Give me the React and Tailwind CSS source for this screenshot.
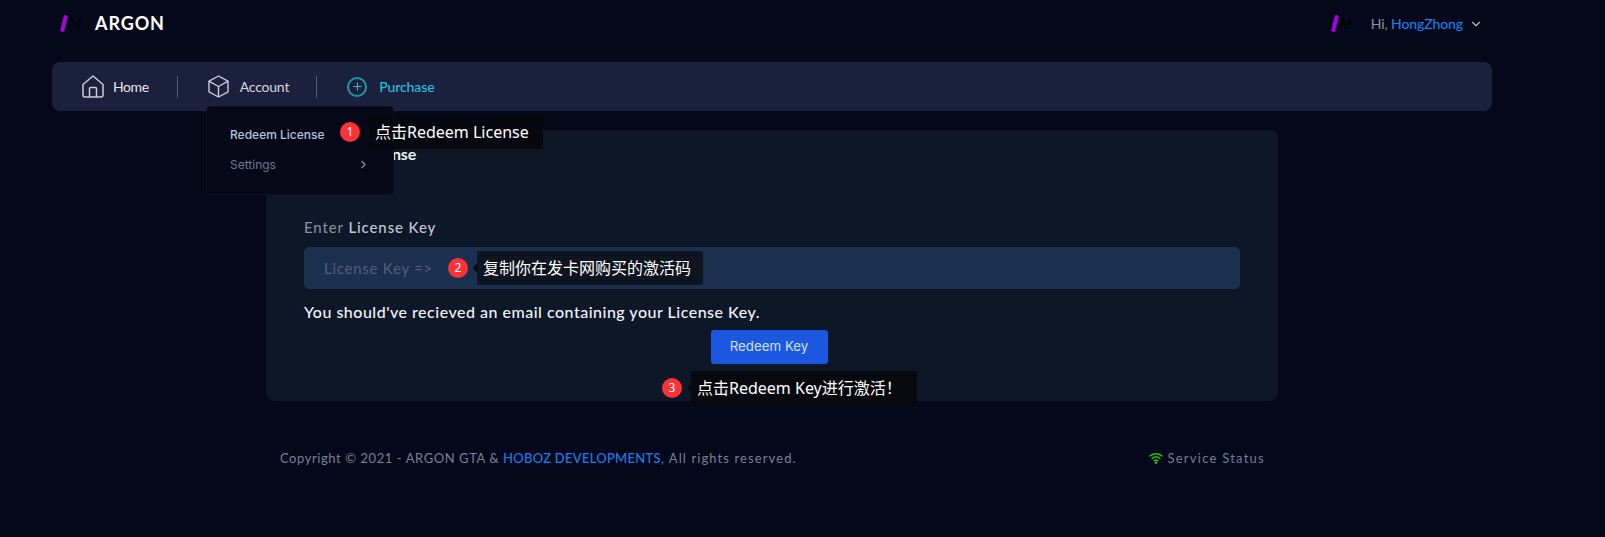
import React from 'react';
import { ChevronDown, ChevronRight, Plus } from 'lucide-react';

const QS = 'font-["Lato","Noto_Sans_CJK_SC",sans-serif]';

function Logo({ small }) {
  return (
    <div className={`relative flex items-center ${small ? 'w-[39px]' : 'w-[33px]'} h-[20px]`}>
      <span className="absolute left-[1px] top-[2px] w-[4px] h-[17px] bg-[#a800e0] rotate-[14deg] rounded-[1px]" />
      <span className="absolute left-[5px] top-[1px] text-[16px] leading-[20px] text-black font-['Liberation_Sans',sans-serif]">Ar</span>
    </div>
  );
}

function HomeIcon() {
  return (
    <svg width="22" height="23" viewBox="0 0 22 23" fill="none" stroke="#c9ccd8" strokeWidth="1.5" strokeLinejoin="round">
      <path d="M1 9.5 11 1l10 8.5V20a2 2 0 0 1-2 2H3a2 2 0 0 1-2-2z" />
      <path d="M7.5 22v-8.5a1 1 0 0 1 1-1h5a1 1 0 0 1 1 1V22" />
    </svg>
  );
}

function BoxIcon() {
  return (
    <svg width="21" height="23" viewBox="0 0 21 23" fill="none" stroke="#c9ccd8" strokeWidth="1.4" strokeLinejoin="round">
      <path d="M10.5 1 20 6.2v10.6L10.5 22 1 16.8V6.2z" />
      <path d="M1 6.2l9.5 5.3L20 6.2M10.5 11.5V22" />
    </svg>
  );
}

function Wifi() {
  return (
    <svg width="14" height="12" viewBox="0 0 14 12" fill="none" stroke="#22c411" strokeWidth="1.5" strokeLinecap="round">
      <path d="M1 4c3.4-3 8.6-3 12 0" />
      <path d="M3.2 6.4c2.2-1.9 5.4-1.9 7.6 0" />
      <path d="M5.3 8.6c1-.8 2.4-.8 3.4 0" />
      <circle cx="7" cy="10.6" r=".6" fill="#22c411" />
    </svg>
  );
}

function Tip({ num, className, children, boxClass }) {
  return (
    <div className={`absolute flex items-center ${className}`}>
      <span className="w-[20px] h-[20px] rounded-full bg-[#fb3236] text-white text-[12px] flex items-center justify-center font-['Noto_Sans',sans-serif]">
        {num}
      </span>
      <span className="ml-[5px] w-0 h-0 border-y-[5px] border-y-transparent border-r-[4px] border-r-[#0a0c14]" />
      <span className={`h-[34px] flex items-center rounded-[2px] text-white text-[16px] whitespace-nowrap font-['Noto_Sans','Noto_Sans_CJK_SC',sans-serif] ${boxClass}`}>
        {children}
      </span>
    </div>
  );
}

export default function App() {
  return (
    <div className={`relative w-[1605px] h-[537px] overflow-hidden bg-[#05081a] text-white ${QS}`}>
      {/* Top bar */}
      <header className="h-[46px] flex items-center pl-[61px] pr-[122px] justify-between">
        <div className="flex items-center">
          <Logo />
          <span className="ml-[1px] text-[18px] font-bold tracking-[0.9px]">ARGON</span>
        </div>
        <div className="flex items-center">
          <Logo small />
          <span className="text-[14px] text-[#8d93a8] tracking-[-0.1px]">Hi, <span className="text-[#1a7fec] font-medium">HongZhong</span></span>
          <ChevronDown size={14} className="ml-[6px] mt-[2px] text-[#b5b8c4]" />
        </div>
      </header>

      {/* Nav */}
      <nav className="ml-[52px] mt-[16px] w-[1440px] h-[49px] rounded-[8px] bg-[#1b203c] flex items-center pl-[30px]">
        <HomeIcon />
        <span className="ml-[9px] text-[14px] text-[#e4e6ee] tracking-[-0.4px]">Home</span>
        <span className="ml-[28px] w-px h-[22px] bg-[#565a72]" />
        <span className="ml-[30px]"><BoxIcon /></span>
        <span className="ml-[11px] text-[14px] text-[#d5d8e2] tracking-[-0.2px]">Account</span>
        <span className="ml-[27px] w-px h-[22px] bg-[#565a72]" />
        <span className="ml-[30px] w-[20px] h-[20px] rounded-full border-2 border-[#1f97ad] flex items-center justify-center">
          <Plus size={13} className="text-[#25b6d2]" />
        </span>
        <span className="ml-[12px] text-[14px] text-[#22c0e0] font-medium tracking-[-0.1px]">Purchase</span>
      </nav>

      {/* Redeem card */}
      <main className="ml-[266px] mt-[19px] w-[1012px] h-[271px] rounded-[8px] bg-[#0d1727] px-[38px] pt-[14px]">
        <h2 className="text-[16px] font-bold leading-[20px] tracking-[-0.2px] text-[#eef0f5]">Redeem License</h2>
        <p className="mt-[53px] text-[15px] leading-[20px] tracking-[0.9px] text-[#8a93ab]">
          Enter <span className="font-medium text-[#c3c8d6]">License Key</span>
        </p>
        <div className="mt-[10px] h-[42px] rounded-[5px] bg-[#1b2f4f] flex items-center pl-[20px] text-[15px] tracking-[0.75px] text-[#525f78]">
          License Key =&gt;
        </div>
        <p className="mt-[12px] text-[16px] leading-[22px] tracking-[0.5px] text-[#f2f4f8] font-medium">
          You should've recieved an email containing your License Key.
        </p>
        <div className="mt-[7px] pr-[6px] flex justify-center">
          <button className="w-[117px] h-[34px] rounded-[3px] bg-[#1c58df] text-[13.3px] text-[#d4e0fb] font-['Inter',sans-serif]">
            Redeem Key
          </button>
        </div>
      </main>

      {/* Footer */}
      <footer className="ml-[280px] mt-[48px] w-[985px] flex items-center justify-between text-[13px] leading-[18px] tracking-[0.57px] text-[#79809a]">
        <p>
          Copyright © 2021 - ARGON GTA &amp; <span className="text-[#1a7fec] font-medium tracking-[0.27px]">HOBOZ DEVELOPMENTS</span><span className="tracking-[1.1px]">, All rights reserved.</span>
        </p>
        <p className="flex items-center gap-[4px] text-[#737c9c] tracking-[1.25px]">
          <Wifi /> Service Status
        </p>
      </footer>

      {/* Account dropdown */}
      <div className="absolute left-[206px] top-[106px] w-[188px] h-[89px] rounded-[4px] bg-[#060817] border border-[#0e1126] font-['Inter',sans-serif] text-[12px]">
        <p className="absolute left-[23px] top-[19px] text-[#b3c3df] font-medium">Redeem License</p>
        <p className="absolute left-[23px] top-[49px] text-[#6f7596]">Settings</p>
        <ChevronRight size={13} className="absolute right-[23px] top-[51px] text-[#8f93a8]" />
      </div>

      {/* Annotations */}
      <Tip num="1" className="left-[340px] top-[115px]" boxClass="bg-[#07080f] pl-[6px] pr-[12px] w-[174px]">点击Redeem License</Tip>
      <Tip num="2" className="left-[448px] top-[251px]" boxClass="bg-[#0e1420] pl-[6px] pr-[12px] w-[226px] rounded-[3px]">复制你在发卡网购买的激活码</Tip>
      <Tip num="3" className="left-[662px] top-[371px]" boxClass="bg-[#07090f] pl-[6px] w-[226px] rounded-[3px]">点击Redeem Key进行激活！</Tip>
    </div>
  );
}
